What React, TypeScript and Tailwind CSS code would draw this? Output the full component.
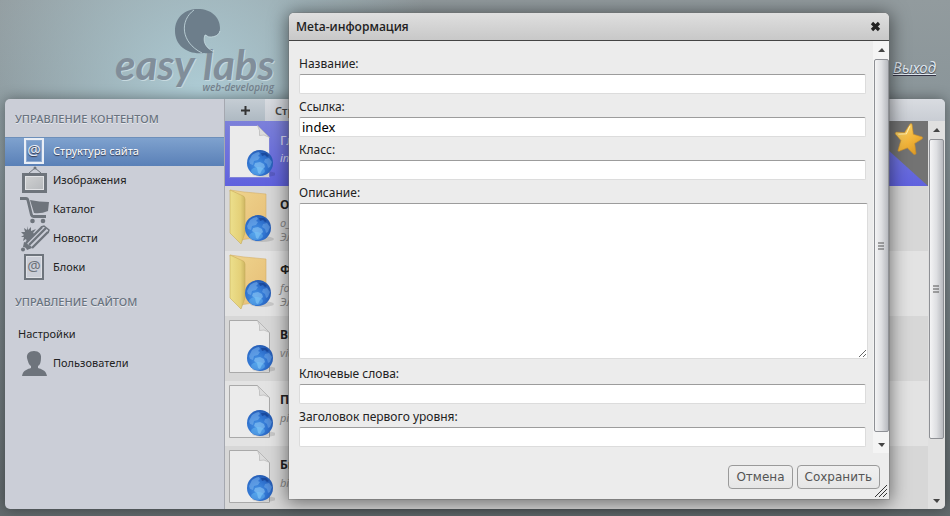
import type { ReactNode } from "react";

function Globe({ x, y }: { x: number; y: number }) {
  return (
    <g transform={`translate(${x} ${y})`}>
      <ellipse cx="17" cy="24" rx="12" ry="3" fill="#000" opacity="0.12" />
      <circle cx="13" cy="13" r="13" fill="url(#globe)" />
      <path d="M5 5q4-3 7-3l1 2-2 2 2 1-2 3-4 1-1 4-3-1-1-3z" fill="#7cb4ee" opacity="0.55" />
      <path d="M8 13l5-1 4 2 1 3-3 3-2 4-2-1-1-5-3-2z" fill="#8cc4f4" opacity="0.6" />
      <path d="M18 9l4-1 3 4-2 5-2 1-1-4-3-2z" fill="#7cb4ee" opacity="0.45" />
      <path d="M14 3l5 0 3 3-2 1-2-2-3 1z" fill="#123c8c" opacity="0.65" />
      <ellipse cx="11" cy="21" rx="7" ry="4" fill="#7cd0ff" opacity="0.35" />
    </g>
  );
}

function Defs() {
  return (
    <svg className="absolute size-0" aria-hidden="true">
      <defs>
        <radialGradient id="globe" cx="0.4" cy="0.6" r="0.65">
          <stop offset="0" stopColor="#4795e6" />
          <stop offset="0.6" stopColor="#2f72cf" />
          <stop offset="1" stopColor="#2458ae" />
        </radialGradient>
        <linearGradient id="folderBack" x1="0" y1="0" x2="1" y2="1">
          <stop offset="0" stopColor="#efd58e" />
          <stop offset="1" stopColor="#e6bd76" />
        </linearGradient>
        <linearGradient id="folderFront" x1="0" y1="0" x2="1" y2="0">
          <stop offset="0" stopColor="#ecdf8c" />
          <stop offset="0.7" stopColor="#e4d078" />
          <stop offset="1" stopColor="#cdb662" />
        </linearGradient>
        <linearGradient id="gold" x1="0" y1="0" x2="1" y2="1">
          <stop offset="0" stopColor="#ffe27c" />
          <stop offset="0.55" stopColor="#f4b63b" />
          <stop offset="1" stopColor="#d48f1c" />
        </linearGradient>
        <linearGradient id="canvas" x1="0" y1="0" x2="1" y2="1">
          <stop offset="0" stopColor="#d2d3d4" />
          <stop offset="1" stopColor="#b3b6ba" />
        </linearGradient>
      </defs>
    </svg>
  );
}

function FileIcon({ active }: { active: boolean }) {
  return (
    <svg width="50" height="60" viewBox="0 0 50 60" aria-hidden="true">
      <path d="M4.500 4.500h28l12 12v40h-40z" fill="#ebebeb" stroke={active ? "#8184d8" : "#a9a9a9"} />
      <path d="M32.500 4.500l12 12q-6-4-10-2 1-5-2-10z" fill="#dcdcdc" stroke="#b5b5b5" strokeWidth="0.700" />
      <Globe x={22} y={29} />
    </svg>
  );
}

function FolderIcon() {
  return (
    <svg width="50" height="60" viewBox="0 0 50 60" aria-hidden="true">
      <path d="M5 4l14 2 22 2v42l-26 4z" fill="url(#folderBack)" stroke="#d5b06a" strokeWidth="0.600" />
      <path d="M5 4l11 5q4 1 4 4v34l-4 11-11-11z" fill="url(#folderFront)" stroke="#c8ac5a" strokeWidth="0.600" />
      <Globe x={20} y={29} />
    </svg>
  );
}

function AtIcon({ light = false }: { light?: boolean }) {
  const c = light ? "#e9eef6" : "#6e747c";
  return (
    <svg width="32" height="29" viewBox="0 0 32 29" aria-hidden="true">
      <rect x="7" y="2" width="18" height="24" fill="none" stroke={c} strokeWidth="2" />
      <rect x="8.500" y="3.500" width="15" height="21" fill="none" stroke={light ? "#8ea9cf" : "#dfe1e6"} />
      <text x="16" y="18" textAnchor="middle" fill={c} fontSize="15" fontFamily="Noto Sans, sans-serif">@</text>
    </svg>
  );
}

function FrameIcon() {
  return (
    <svg width="32" height="29" viewBox="0 0 32 29" aria-hidden="true">
      <path d="M11 7l6-5 6 5" fill="none" stroke="#6e747c" />
      <circle cx="17" cy="2" r="1.500" fill="#6e747c" />
      <rect x="5.500" y="8.500" width="22" height="17" fill="url(#canvas)" stroke="#6e747c" strokeWidth="3" />
      <rect x="7.500" y="10.500" width="18" height="13" fill="none" stroke="#e2e3e6" />
    </svg>
  );
}

function CartIcon() {
  return (
    <svg width="32" height="29" viewBox="0 0 32 29" aria-hidden="true">
      <path d="M2 3.500h6q1.500 0 2 2L13.500 20q.5 1.500 2 1.500H28" fill="none" stroke="#6e747c" strokeWidth="2.800" />
      <path d="M12 5q9 2 19 2l-1 9q-7 3-14 2z" fill="#6e747c" />
      <circle cx="14.500" cy="26" r="2.300" fill="#6e747c" />
      <circle cx="25" cy="26" r="2.300" fill="#6e747c" />
    </svg>
  );
}

function PencilIcon() {
  return (
    <svg width="32" height="29" viewBox="0 0 32 29" aria-hidden="true">
      <path d="M9 2l1 4 3-3 0 4 5-2-3 4 2 1-8 8-1-3-3 2 1-4-3 0 3-2-3-3 4 0-1-4 3 2z" fill="#6e747c" />
      <path d="M8 19L24 3M11 21L28 4M14 24L30 8" stroke="#6e747c" strokeWidth="2.400" />
      <path d="M23 3l3-1 5 4-1 3" fill="none" stroke="#6e747c" strokeWidth="1.500" />
      <path d="M6 18q4 1 4 3 3 0 4 3l-5 2q-1-3-4-3z" fill="#6e747c" />
      <circle cx="5" cy="25.500" r="2" fill="#6e747c" />
    </svg>
  );
}

function UserIcon() {
  return (
    <svg width="32" height="29" viewBox="0 0 32 29" aria-hidden="true">
      <path d="M16 2c5 0 7.500 3 7 7 0 4-1 7-3 8v2c3 1 8 2 9 8H4c1-6 6-7 9-8v-2c-2-1-3-4-4-8-.5-4 2-7 7-7z" fill="#6e747c" />
    </svg>
  );
}

function Logo() {
  return (
    <svg width="180" height="99" viewBox="0 0 180 99" role="img" aria-label="easy labs web-developing">
      <g fontStyle="italic" fontWeight="700">
        <text x="5" y="80" fontSize="42" fontFamily="Lato, sans-serif" fill="#818e9a" className="[text-shadow:1px_1px_0_#c6d9df]">easy labs</text>
        <text x="164" y="91" fontSize="10" textAnchor="end" fontFamily="Open Sans, sans-serif" fontWeight="600" fill="#76838e">web-developing</text>
      </g>
      <path d="M94 53C78 55 65 46 65 31 65 17 75 9 88 9c13 0 22 8 22 19 0 7-5 9-10 9-3 0-3-2-5-2-2 5-1 12 9 17q-5 2-10 1z" fill="#6d7e8b" />
      <path d="M84 10C70 20 70 42 92 53" fill="none" stroke="#b6cad1" />
      <path d="M104 52c-10-5-11-12-9-17 2 0 2 2 5 2 5 0 9-2 10-6" fill="none" stroke="#c9dde2" strokeWidth="0.800" />
    </svg>
  );
}

function ScrollBar({ thumb, className }: { thumb: string; className: string }) {
  return (
    <div className={`flex shrink-0 flex-col items-center ${className}`} aria-hidden="true">
      <div className="flex h-[18px] shrink-0 items-center">
        <svg width="7" height="4"><path d="M0 4L4 0l3 4z" fill="#444" /></svg>
      </div>
      <div className={`flex w-[15px] items-center justify-center rounded-xs border border-[#8e9095] bg-linear-to-r from-[#f4f4f5] via-[#dedfe2] to-[#b8babf] ${thumb}`}>
        <svg width="7" height="8"><path d="M0 1h6M0 4h6M0 7h6" stroke="#555" /></svg>
      </div>
      <div className="mt-auto flex h-[17px] shrink-0 items-center">
        <svg width="7" height="4"><path d="M0 0h7L4 4z" fill="#444" /></svg>
      </div>
    </div>
  );
}

function MenuItem({ icon, children, active = false }: { icon?: ReactNode; children: ReactNode; active?: boolean }) {
  return (
    <li>
      <a
        href="#"
        className={
          active
            ? "flex h-[29px] items-center gap-[3px] bg-linear-to-b from-[#80a3cf] to-[#5a80b7] pl-[13px] text-white [text-shadow:0_1px_1px_#334] shadow-[inset_0_1px_0_#6d8fba]"
            : "flex h-[29px] items-center gap-[3px] pl-[13px] text-[#222]"
        }
      >
        {icon}
        <span>{children}</span>
      </a>
    </li>
  );
}

function MenuHeading({ children }: { children: ReactNode }) {
  return <h2 className="h-[38px] pl-[10px] text-[11px] leading-[40px] font-medium text-[#68727e] [text-shadow:0_1px_0_#e8eaee]">{children}</h2>;
}

const pages = [
  { title: "Главная", slug: "index", note: "", folder: false },
  { title: "О компании", slug: "o_kompanii", note: "Элементов: 3", folder: true },
  { title: "Фото", slug: "foto", note: "Элементов: 5", folder: true },
  { title: "Видео", slug: "video", note: "", folder: false },
  { title: "Письма", slug: "pisma", note: "", folder: false },
  { title: "Биография", slug: "biografiya", note: "", folder: false },
];

function PageRow({ page, index }: { page: (typeof pages)[number]; index: number }) {
  const active = index === 0;
  const tone = active
    ? "bg-linear-to-b from-[#7c80da] to-[#6062de] text-[#dcdcf5]"
    : index % 2
      ? "bg-[#d7d7d7] text-[#222]"
      : "bg-[#e3e3e3] text-[#222]";
  return (
    <li className={`relative flex h-[65px] shrink-0 ${tone}`}>
      {page.folder ? <FolderIcon /> : <FileIcon active={active} />}
      <div className="pt-[9px] pl-[5px]">
        <div className={active ? "text-[13px] leading-[20px]" : "text-[12px] leading-[20px] font-bold"}>{page.title}</div>
        <div className={active ? "text-[11px] leading-[15px] italic" : "text-[11px] leading-[15px] text-[#8a8a8a] italic"}>{page.slug}</div>
        {page.note && <div className="text-[11px] leading-[13px] text-[#8a8a8a] italic">{page.note}</div>}
      </div>
      {active && (
        <svg className="absolute top-0 right-0" width="72" height="65" viewBox="0 0 72 65" aria-hidden="true">
          <path d="M0 0h72v65z" fill="#737373" />
          <g transform="rotate(4 53 18)">
            <path d="M53 3q1-1 2 0l2 10 9 2q1 1 0 2l-7 5 2 10q0 1-2 1l-7-6-8 4q-2 0-1-2l2-9-6-6q-1-1 1-2l8 0z" fill="url(#gold)" stroke="#c98d2a" strokeWidth="0.600" />
            <path d="M53 5l-3 8-8 1" fill="none" stroke="#ffeeb0" strokeWidth="1" />
          </g>
        </svg>
      )}
    </li>
  );
}

const labelStyle = "block h-[23px] text-[12px] leading-[25px]";

function Field({ id, label, value = "" }: { id: string; label: string; value?: string }) {
  return (
    <div className="pr-[7px]">
      <label htmlFor={id} className={labelStyle}>{label}</label>
      <input
        id={id}
        type="text"
        defaultValue={value}
        className="block h-[20px] w-full rounded-xs border border-[#dcdcdc] border-t-[#9c9c9c] bg-white px-[2px] text-[13px] leading-[18px] text-black outline-none"
      />
    </div>
  );
}

function MetaDialog() {
  const button = "h-[24px] rounded-[4px] border border-[#9a9a9a] bg-linear-to-b from-[#f0f0f0] to-[#e6e6e6] px-[7px] font-['DejaVu_Sans',sans-serif] text-[12px] leading-[20px] text-[#555]";
  return (
    <section
      role="dialog"
      aria-labelledby="dialog-title"
      className="absolute top-[13px] right-[61px] flex w-[600px] flex-col rounded-t-[5px] bg-[#ececec] text-[#222] shadow-[0_2px_18px_2px_rgba(0,0,0,0.5),0_0_0_1px_rgba(150,150,150,0.4)]"
    >
      <header className="flex h-[28px] items-center justify-between rounded-t-[5px] border-b border-[#444] bg-linear-to-b from-[#dfdfdf] to-[#c8c8c8] pr-[8px] pl-[7px]">
        <h1 id="dialog-title" className="font-['Open_Sans',sans-serif] text-[12px] font-semibold">Meta-информация</h1>
        <button type="button" aria-label="Закрыть" className="flex size-[11px] items-center justify-center">
          <svg width="11" height="11" viewBox="0 0 11 11" aria-hidden="true">
            <path d="M2 2l7 7M9 2L2 9" stroke="#222" strokeWidth="3.200" />
          </svg>
        </button>
      </header>
      <div className="flex h-[412px]">
        <form className="min-w-0 flex-1 overflow-hidden pt-[10px] pl-[10px]">
          <Field id="name" label="Название:" />
          <Field id="link" label="Ссылка:" value="index" />
          <Field id="class" label="Класс:" />
          <div className="pr-[5px] pb-[2px]">
            <label htmlFor="about" className={labelStyle}>Описание:</label>
            <textarea
              id="about"
              className="block h-[156px] w-full resize rounded-xs border border-[#dcdcdc] border-t-[#9c9c9c] bg-white outline-none"
            />
          </div>
          <Field id="keywords" label="Ключевые слова:" />
          <Field id="heading" label="Заголовок первого уровня:" />
        </form>
        <ScrollBar thumb="h-[373px]" className="w-[16px] bg-[#f4f4f4]" />
      </div>
      <footer className="relative flex h-[46px] items-start justify-end gap-1 pt-[12px] pr-[9px]">
        <button type="button" className={button}>Отмена</button>
        <button type="button" className={button}>Сохранить</button>
        <svg className="absolute right-[2px] bottom-[2px]" width="12" height="12" aria-hidden="true">
          <path d="M0 12L12 0M4 12l8-8M8 12l4-4" stroke="#333" />
        </svg>
      </footer>
    </section>
  );
}

export default function App() {
  return (
    <div className="relative flex h-screen flex-col overflow-hidden bg-[radial-gradient(circle_at_200px_90px,#adcbd4_0,#adcbd400_240px),linear-gradient(#929b9e,#869297_30%,#626a6d)] font-['Noto_Sans',sans-serif]">
      <Defs />
      <header className="flex h-[99px] shrink-0 items-start justify-between pr-[14px] pl-[110px]">
        <Logo />
        <a href="#" className="pt-[56px] text-[15px] leading-[22px] text-[#dfe6ee] italic underline [text-shadow:0_1px_1px_#334]">Выход</a>
      </header>
      <main className="mx-[5px] mb-[7px] flex min-h-0 flex-1 overflow-hidden rounded-[5px] bg-[#cbced7] shadow-[0_0_14px_rgba(0,0,0,0.4)]">
        <nav className="w-[220px] shrink-0 border-r border-[#a5a8b0] text-[11px]">
          <MenuHeading>УПРАВЛЕНИЕ КОНТЕНТОМ</MenuHeading>
          <ul>
            <MenuItem active icon={<AtIcon light />}>Структура сайта</MenuItem>
            <MenuItem icon={<FrameIcon />}>Изображения</MenuItem>
            <MenuItem icon={<CartIcon />}>Каталог</MenuItem>
            <MenuItem icon={<PencilIcon />}>Новости</MenuItem>
            <MenuItem icon={<AtIcon />}>Блоки</MenuItem>
          </ul>
          <MenuHeading>УПРАВЛЕНИЕ САЙТОМ</MenuHeading>
          <ul>
            <MenuItem>Настройки</MenuItem>
            <MenuItem icon={<UserIcon />}>Пользователи</MenuItem>
          </ul>
        </nav>
        <div className="flex min-w-0 flex-1 flex-col">
          <div className="flex h-[22px] shrink-0 bg-linear-to-b from-[#d9dce1] to-[#c9cdd4] text-[11px] leading-[24px] font-semibold text-[#444]">
            <button type="button" aria-label="Добавить" className="flex w-[40px] items-center justify-center bg-linear-to-b from-[#c5cdd4] to-[#aeb9c2]">
              <svg width="9" height="9" aria-hidden="true"><path d="M0 4.500h9M4.500 0v9" stroke="#333" strokeWidth="2" /></svg>
            </button>
            <span className="pl-[10px]">Структура</span>
          </div>
          <div className="flex min-h-0 flex-1">
            <ul className="min-w-0 flex-1 overflow-hidden">
              {pages.map((page, i) => (
                <PageRow key={page.slug} page={page} index={i} />
              ))}
            </ul>
            <ScrollBar thumb="h-[300px]" className="w-[17px] bg-[#e0e0e0]" />
          </div>
        </div>
      </main>
      <MetaDialog />
    </div>
  );
}
